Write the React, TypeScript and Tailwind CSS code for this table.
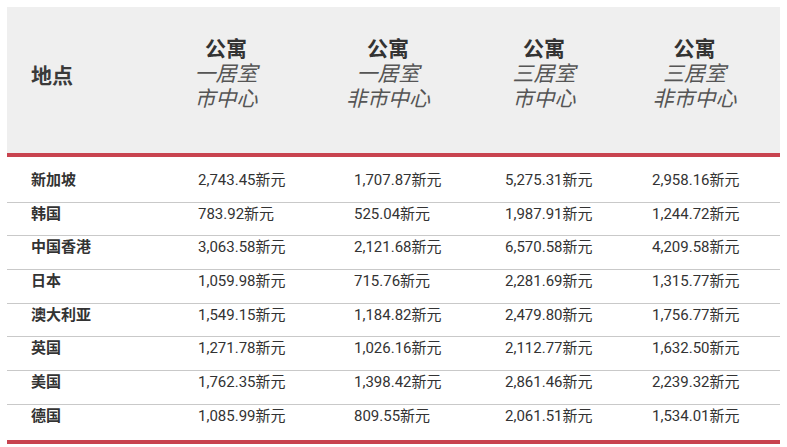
import React from 'react';

type Row = {
  place: string;
  values: [string, string, string, string];
};

const rows: Row[] = [
  { place: '新加坡', values: ['2,743.45', '1,707.87', '5,275.31', '2,958.16'] },
  { place: '韩国', values: ['783.92', '525.04', '1,987.91', '1,244.72'] },
  { place: '中国香港', values: ['3,063.58', '2,121.68', '6,570.58', '4,209.58'] },
  { place: '日本', values: ['1,059.98', '715.76', '2,281.69', '1,315.77'] },
  { place: '澳大利亚', values: ['1,549.15', '1,184.82', '2,479.80', '1,756.77'] },
  { place: '英国', values: ['1,271.78', '1,026.16', '2,112.77', '1,632.50'] },
  { place: '美国', values: ['1,762.35', '1,398.42', '2,861.46', '2,239.32'] },
  { place: '德国', values: ['1,085.99', '809.55', '2,061.51', '1,534.01'] },
];

const headers = [
  { rooms: '一居室', area: '市中心' },
  { rooms: '一居室', area: '非市中心' },
  { rooms: '三居室', area: '市中心' },
  { rooms: '三居室', area: '非市中心' },
];

export default function App() {
  return (
    <div
      className="h-[447px] w-[787px] bg-white px-[7px] pt-[7px] text-[#333]"
      style={{ fontFamily: 'Roboto, "Noto Sans CJK SC", sans-serif' }}
    >
      {/* header */}
      <div className="grid h-[150px] grid-cols-[138px_162px_162px_150px_1fr] border-b-4 border-[#c8434f] bg-[#efefef] pt-[30px]">
        <div className="pl-[24px] pt-[27px] text-[21px] leading-[25px] font-bold text-[#3a3a3a]">
          地点
        </div>
        {headers.map((h, i) => (
          <div
            key={i}
            className={`text-center text-[21px] leading-[25px] ${i === 3 ? 'pr-[10px]' : ''}`}
          >
            <div className="font-bold text-[#333]">公寓</div>
            <div className="italic text-[#555]">{h.rooms}</div>
            <div className="italic text-[#555]">{h.area}</div>
          </div>
        ))}
      </div>

      {/* body */}
      <div className="pt-[12px]">
        {rows.map((r, i) => (
          <div
            key={r.place}
            className={`grid h-[33.7px] grid-cols-[191px_156px_151px_147px_1fr] text-[15px] leading-[22px] ${
              i < rows.length - 1 ? 'border-b border-[#c9c9c9]' : ''
            }`}
          >
            <div className="pl-[24px] font-semibold text-[#333]">{r.place}</div>
            {r.values.map((v, j) => (
              <div key={j} className="text-[#333]">
                {v}新元
              </div>
            ))}
          </div>
        ))}
      </div>
      <div className="mt-[1.5px] h-[4px] bg-[#c8434f]" />
    </div>
  );
}
